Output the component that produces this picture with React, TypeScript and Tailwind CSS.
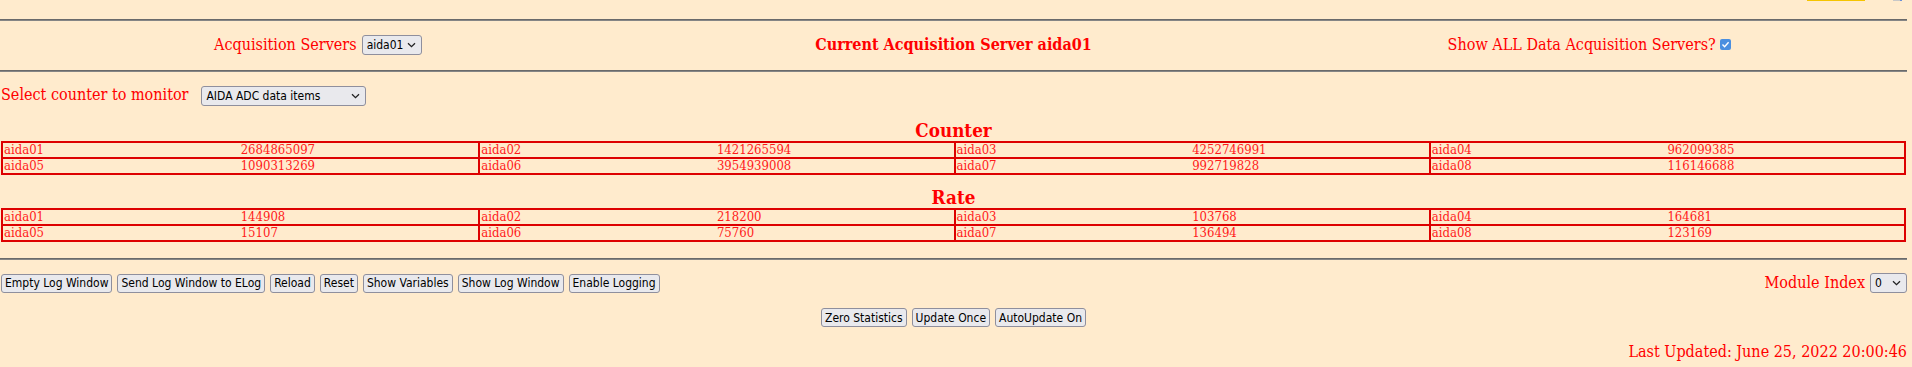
import React from "react";

const serif = "font-['DejaVu_Serif_Condensed','DejaVu_Serif',serif]";
const sans = "font-['DejaVu_Sans_Condensed','DejaVu_Sans',sans-serif]";

const counters = [
  ["aida01", "2684865097"],
  ["aida02", "1421265594"],
  ["aida03", "4252746991"],
  ["aida04", "962099385"],
  ["aida05", "1090313269"],
  ["aida06", "3954939008"],
  ["aida07", "992719828"],
  ["aida08", "116146688"],
];

const rates = [
  ["aida01", "144908"],
  ["aida02", "218200"],
  ["aida03", "103768"],
  ["aida04", "164681"],
  ["aida05", "15107"],
  ["aida06", "75760"],
  ["aida07", "136494"],
  ["aida08", "123169"],
];

function Rule() {
  return <div className="h-[2px] w-[1907px] border-t border-b border-t-[#6a6a6a] border-b-[#858585] bg-[#707070]" />;
}

function Chevron() {
  return (
    <svg width="9" height="6" viewBox="0 0 9 6" className="shrink-0">
      <path d="M1 1.2 L4.5 4.6 L8 1.2" fill="none" stroke="#222" strokeWidth="1.3" />
    </svg>
  );
}

function Select({ value, width }: { value: string; width: string }) {
  return (
    <span
      className={`${sans} ${width} inline-flex h-[20px] items-center justify-between rounded-[3px] border border-[#8f8f9d] bg-[#e9e9ed] pl-[4px] pr-[5px] text-[12px] text-black`}
    >
      <span>{value}</span>
      <Chevron />
    </span>
  );
}

function Button({ label }: { label: string }) {
  return (
    <span
      className={`${sans} inline-flex h-[19px] items-center rounded-[3px] border border-[#8f8f9d] bg-[#e9e9ed] px-[3px] text-[12px] text-black`}
    >
      {label}
    </span>
  );
}

function DataTable({ items }: { items: string[][] }) {
  const rows = [items.slice(0, 4), items.slice(4, 8)];
  return (
    <div className={`${serif} ml-px w-[1905px] border-2 border-[#dd0000] text-[13px] leading-[14px] text-[#ff1a1a]`}>
      {rows.map((row, i) => (
        <div key={i} className={`grid grid-cols-4 ${i > 0 ? "border-t-2 border-[#dd0000]" : ""}`}>
          {row.map(([name, val], j) => (
            <div key={name} className={`flex h-[14px] ${j > 0 ? "border-l-2 border-[#dd0000]" : ""}`}>
              <span className="w-1/2 pl-px">{name}</span>
              <span className="w-1/2">{val}</span>
            </div>
          ))}
        </div>
      ))}
    </div>
  );
}

export default function App() {
  return (
    <div className={`${serif} min-h-[367px] w-[1912px] overflow-hidden bg-[#ffebcd] text-[#ff0000]`}>
      <div className="flex h-[2px] w-[1907px] justify-end">
        <span className="h-[1px] w-[58px] bg-[#f5c400]" />
        <span className="ml-[28px] mr-[5px] h-[1px] w-[9px] border-r-2 border-[#6a8fd8] bg-[#c8c8c8]" />
      </div>

      <div className="mt-[17px]">
        <Rule />
      </div>

      <div className="grid h-[49px] w-[1907px] grid-cols-3 items-center pb-[2px] text-[16px]">
        <div className="flex items-center justify-center gap-[5px]">
          <span>Acquisition Servers</span>
          <Select value="aida01" width="w-[60px]" />
        </div>
        <div className="text-center font-bold">Current Acquisition Server aida01</div>
        <div className="flex items-center justify-center gap-[4px]">
          <span>Show ALL Data Acquisition Servers?</span>
          <span className="flex h-[11px] w-[11px] items-center justify-center rounded-[2px] bg-[#4a8fe0]">
            <svg width="9" height="9" viewBox="0 0 9 9">
              <path d="M1.5 4.6 L3.6 6.7 L7.6 2.2" fill="none" stroke="#fff" strokeWidth="1.4" />
            </svg>
          </span>
        </div>
      </div>

      <Rule />

      <div className="mt-[13px] flex h-[20px] items-center text-[16px]">
        <span className="pl-px">Select counter to monitor</span>
        <span className="ml-[13px]">
          <Select value="AIDA ADC data items" width="w-[165px]" />
        </span>
      </div>

      <h3 className="mt-[14px] h-[22px] w-[1907px] text-center text-[18.7px] font-bold leading-[22px]">Counter</h3>
      <DataTable items={counters} />

      <h3 className="mt-[11px] h-[22px] w-[1907px] text-center text-[18.7px] font-bold leading-[22px]">Rate</h3>
      <DataTable items={rates} />

      <div className="mt-[16px]">
        <Rule />
      </div>

      <div className="mt-[13px] flex h-[20px] w-[1907px] items-center justify-between">
        <div className="flex items-center gap-[5px] pl-px">
          <Button label="Empty Log Window" />
          <Button label="Send Log Window to ELog" />
          <Button label="Reload" />
          <Button label="Reset" />
          <Button label="Show Variables" />
          <Button label="Show Log Window" />
          <Button label="Enable Logging" />
        </div>
        <div className="flex items-center gap-[5px] text-[16px]">
          <span>Module Index</span>
          <Select value="0" width="w-[37px]" />
        </div>
      </div>

      <div className="mt-[15px] flex w-[1907px] justify-center gap-[5px]">
        <Button label="Zero Statistics" />
        <Button label="Update Once" />
        <Button label="AutoUpdate On" />
      </div>

      <div className="mt-[15px] w-[1907px] text-right text-[16px] leading-[19px]">Last Updated: June 25, 2022 20:00:46</div>
    </div>
  );
}
